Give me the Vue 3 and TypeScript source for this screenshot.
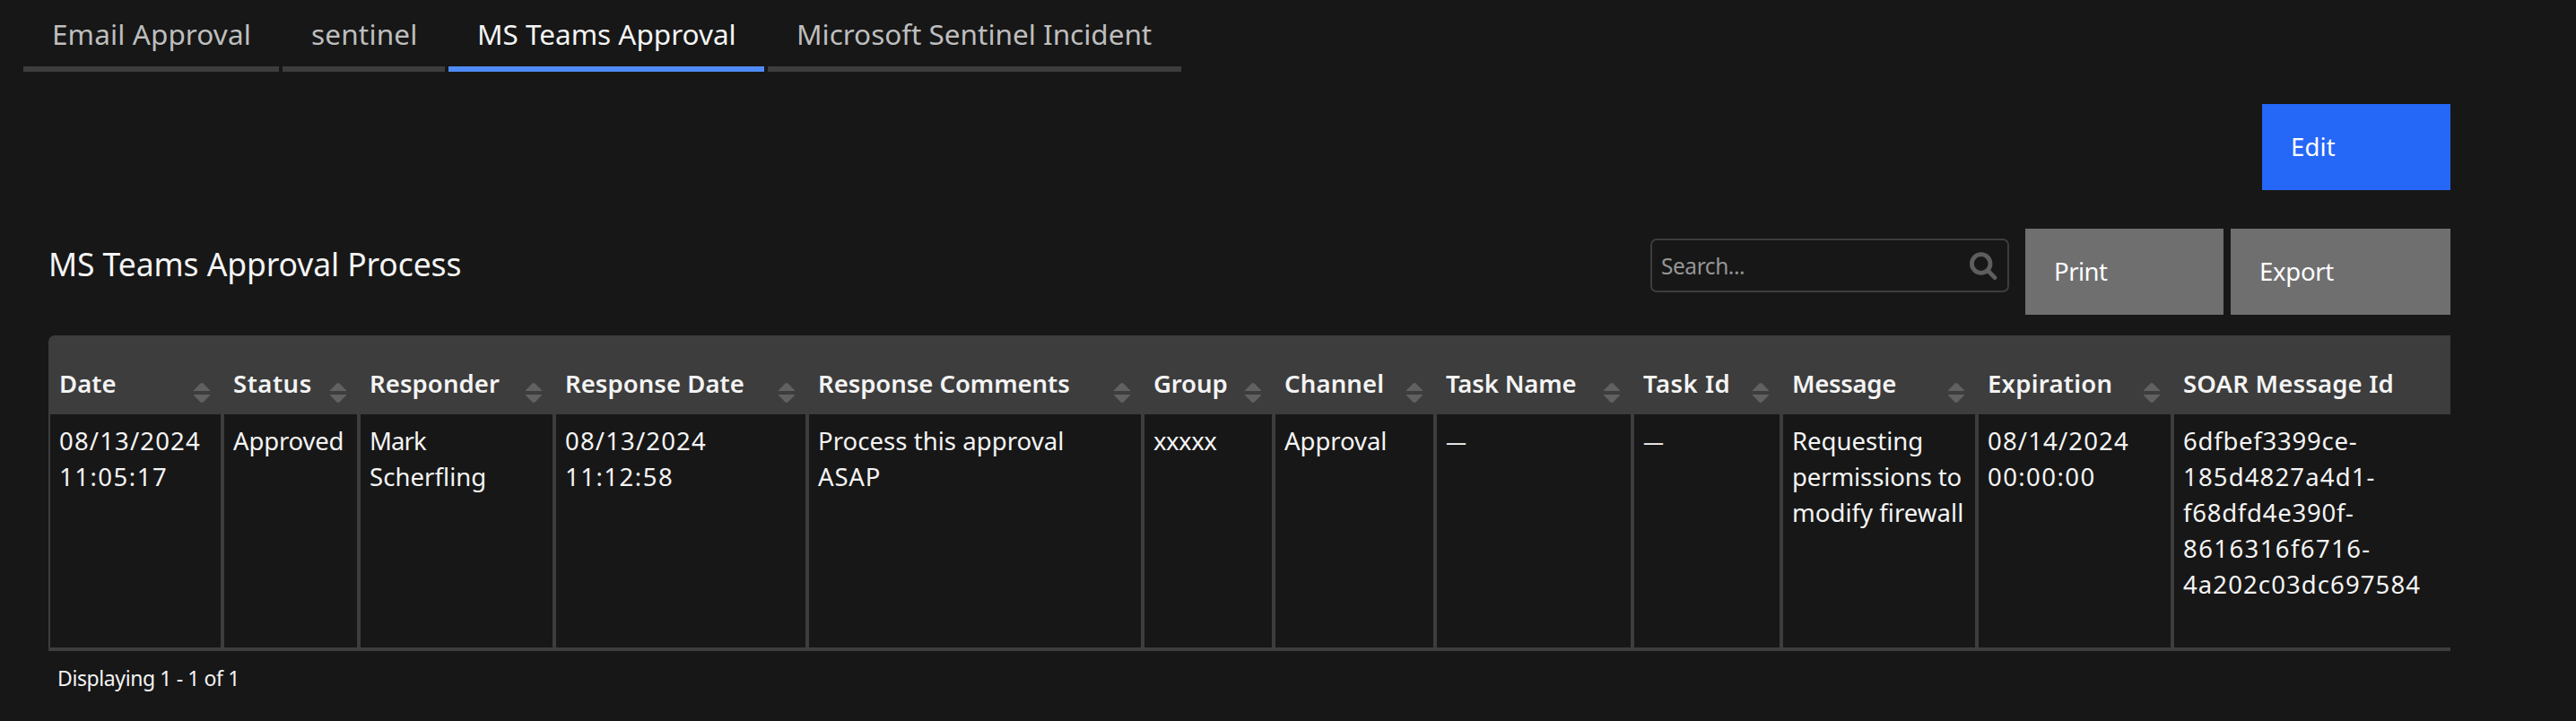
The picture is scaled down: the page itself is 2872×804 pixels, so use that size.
<script setup lang="ts">
interface Label {
  text: string
  spacing: number
}

interface Tab extends Label {
  width: number
  active?: boolean
}

interface Column {
  title: Label
  width: number
  sortable: boolean
  lines: Label[]
}

const label = (text: string, spacing = 0): Label => ({ text, spacing })

const tabs: Tab[] = [
  { text: 'Email Approval', spacing: 0.1, width: 285 },
  { text: 'sentinel', spacing: 0.18, width: 181 },
  { text: 'MS Teams Approval', spacing: -0.02, width: 352, active: true },
  { text: 'Microsoft Sentinel Incident', spacing: -0.02, width: 461 },
]

const columns: Column[] = [
  { title: label('Date', 0.01), width: 196, sortable: true, lines: [label('08/13/2024', 1.16), label('11:05:17', 1.5)] },
  { title: label('Status', 0.52), width: 152, sortable: true, lines: [label('Approved', -0.17)] },
  { title: label('Responder', 0.08), width: 218, sortable: true, lines: [label('Mark', -0.9), label('Scherfling', 0.06)] },
  { title: label('Response Date', 0.05), width: 282, sortable: true, lines: [label('08/13/2024', 1.16), label('11:12:58', 1.5)] },
  { title: label('Response Comments', -0.05), width: 374, sortable: true, lines: [label('Process this approval', 0.05), label('ASAP', 0.82)] },
  { title: label('Group', -0.12), width: 146, sortable: true, lines: [label('xxxxx', -0.5)] },
  { title: label('Channel', 0.15), width: 180, sortable: true, lines: [label('Approval', -0.05)] },
  { title: label('Task Name', -0.15), width: 220, sortable: true, lines: [label('—')] },
  { title: label('Task Id', 0.5), width: 166, sortable: true, lines: [label('—')] },
  { title: label('Message', -0.31), width: 218, sortable: true, lines: [label('Requesting', 0), label('permissions to', -0.1), label('modify firewall', 0.05)] },
  { title: label('Expiration', 0.25), width: 218, sortable: true, lines: [label('08/14/2024', 1.16), label('00:00:00', 1.43)] },
  {
    title: label('SOAR Message Id', 0.18),
    width: 308,
    sortable: false,
    lines: [
      label('6dfbef3399ce-', 0.77),
      label('185d4827a4d1-', 1.15),
      label('f68dfd4e390f-', 0.75),
      label('8616316f6716-', 1.4),
      label('4a202c03dc697584', 1.1),
    ],
  },
]

const track = (l: Label) => ({ letterSpacing: `${l.spacing}px` })
const size = (w: number) => ({ width: `${w}px` })
</script>

<template>
  <div class="page">
    <nav class="tabs">
      <a v-for="tab in tabs" :key="tab.text" class="tab" :class="{ active: tab.active }" :style="size(tab.width)">
        <span :style="track(tab)">{{ tab.text }}</span>
      </a>
    </nav>

    <main class="content">
      <div class="actions">
        <button class="btn primary">Edit</button>
      </div>

      <header class="toolbar">
        <h1 class="title">MS Teams Approval Process</h1>
        <div class="tools">
          <div class="search">
            <span class="placeholder">Search...</span>
            <svg class="magnifier" viewBox="0 0 31 31" width="31" height="31">
              <circle cx="12.7" cy="13" r="10.3" />
              <path d="M20.3 20.8 L28 28.6" />
            </svg>
          </div>
          <button class="btn print">Print</button>
          <button class="btn export">Export</button>
        </div>
      </header>

      <table class="grid">
        <colgroup>
          <col v-for="c in columns" :key="c.title.text" :style="size(c.width)" />
        </colgroup>
        <thead>
          <tr>
            <th v-for="c in columns" :key="c.title.text">
              <div class="head">
                <span :style="track(c.title)">{{ c.title.text }}</span>
                <svg v-if="c.sortable" class="sort" viewBox="0 0 18 22" width="18" height="22">
                  <path d="M0 9 V8.2 L7 1 Q9 -1 11 1 L18 8.2 V9 Z" />
                  <path d="M0 13 V13.8 L7 21 Q9 23 11 21 L18 13.8 V13 Z" />
                </svg>
              </div>
            </th>
          </tr>
        </thead>
        <tbody>
          <tr>
            <td v-for="c in columns" :key="c.title.text">
              <div v-for="l in c.lines" :key="l.text" class="line" :class="{ empty: l.text === '—' }" :style="track(l)">{{ l.text }}</div>
            </td>
          </tr>
        </tbody>
      </table>

      <footer class="summary">Displaying 1 - 1 of 1</footer>
    </main>
  </div>
</template>

<style>
html,
body {
  background: #171717;
}
</style>

<style scoped>
.page {
  box-sizing: border-box;
  width: 2872px;
  height: 804px;
  overflow: hidden;
  background: #171717;
  color: #f4f4f4;
  font-family: 'Noto Sans', sans-serif;
  font-size: 27.5px;
  line-height: 40px;
}

.tabs {
  display: flex;
  gap: 4px;
  padding-left: 26px;
}

.tab {
  box-sizing: border-box;
  flex: none;
  height: 80px;
  padding: 16px 0 0 32px;
  border-bottom: 6px solid #3d3d3d;
  color: #bebebe;
  font-size: 31.5px;
  line-height: 44px;
  white-space: nowrap;
}

.tab.active {
  border-bottom-color: #508cf7;
  color: #f4f4f4;
}

.content {
  width: 2678px;
  margin-left: 54px;
  padding-top: 36px;
}

.actions {
  display: flex;
  justify-content: flex-end;
}

.btn {
  box-sizing: border-box;
  height: 96px;
  padding: 28px 0 28px 32px;
  border: 0;
  background: #6f6f6f;
  color: #fff;
  font: inherit;
  text-align: left;
}

.primary {
  width: 210px;
  background: #2567f7;
  letter-spacing: 0.17px;
}

.print {
  width: 221px;
  margin-right: 8px;
  letter-spacing: -0.5px;
}

.export {
  width: 245px;
  letter-spacing: -0.29px;
}

.toolbar {
  display: flex;
  justify-content: space-between;
  align-items: flex-start;
  margin-top: 43px;
}

.title {
  margin: 15px 0 0;
  font-size: 35.5px;
  font-weight: 400;
  line-height: 48px;
  letter-spacing: -0.1px;
}

.tools {
  display: flex;
  align-items: flex-start;
}

.search {
  box-sizing: border-box;
  display: flex;
  justify-content: space-between;
  align-items: center;
  width: 400px;
  height: 60px;
  margin: 11px 18px 0 0;
  padding: 0 11px 0 10px;
  border: 2px solid #3d3d3d;
  border-radius: 7px;
}

.placeholder {
  padding-top: 2px;
  color: #959595;
  font-size: 24.5px;
  line-height: 36px;
  letter-spacing: -0.45px;
}

.magnifier {
  fill: none;
  stroke: #5e5e5e;
  stroke-width: 4.8;
  stroke-linecap: round;
}

.grid {
  width: 2678px;
  margin-top: 23px;
  border-spacing: 0;
  border-bottom: 4px solid #3d3d3d;
  table-layout: fixed;
}

th {
  box-sizing: border-box;
  height: 88px;
  padding: 0 16.5px 14px 10px;
  background: #3d3d3d;
  font-weight: 650;
  text-align: left;
  vertical-align: bottom;
}

th:first-child {
  padding-left: 12px;
  border-top-left-radius: 7px;
}

.head {
  display: flex;
  justify-content: space-between;
  height: 40px;
  white-space: nowrap;
}

.sort {
  flex: none;
  margin-top: 19px;
  fill: #616161;
}

td {
  box-sizing: border-box;
  height: 260px;
  padding: 10px 0 0 10px;
  border-right: 4px solid #3d3d3d;
  vertical-align: top;
}

td:first-child {
  border-left: 2px solid #3d3d3d;
}

td:last-child {
  border-right: 0;
}

.line {
  white-space: nowrap;
}

.empty {
  font-size: 23px;
}

.summary {
  padding: 14px 0 0 10px;
  font-size: 23px;
  line-height: 32px;
  letter-spacing: -0.4px;
}
</style>
